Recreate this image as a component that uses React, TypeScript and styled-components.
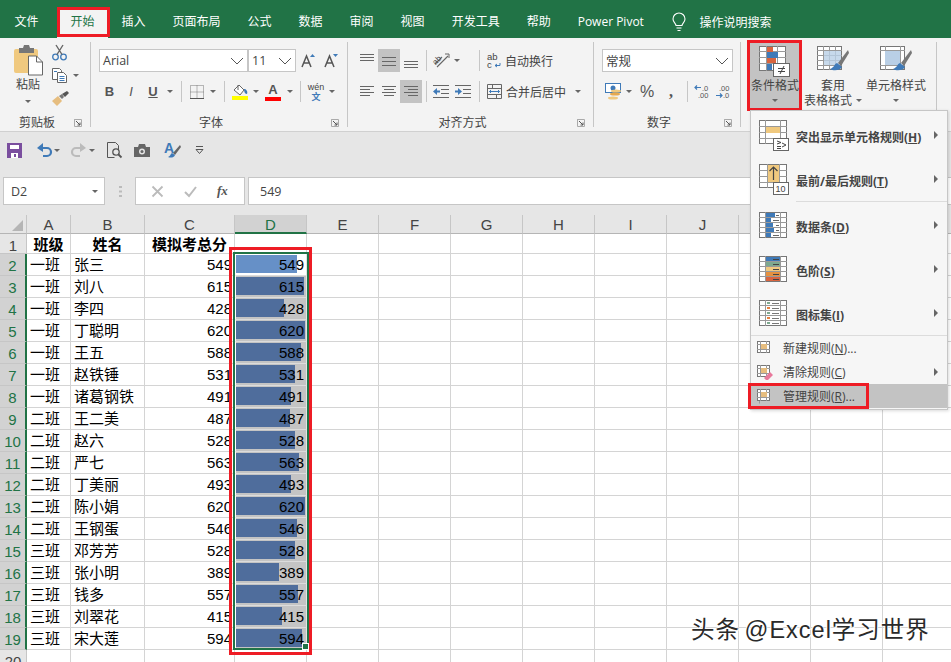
import { ReactNode } from "react";
import styled, { createGlobalStyle } from "styled-components";

const GlobalStyle = createGlobalStyle`
  html, body { margin: 0; padding: 0; background: #fff; }
  body { font-family: "Liberation Sans", "Noto Sans CJK SC", sans-serif; }
`;

const UI = `"Open Sans", "Noto Sans CJK SC", sans-serif`;
const GREEN = "#217346";
const RED = "#ee1c25";

const Page = styled.div`
  position: relative;
  width: 951px;
  height: 662px;
  overflow: hidden;
  display: flex;
  flex-direction: column;
`;

/* title tabs */
const TabBar = styled.div`
  height: 38px;
  flex: none;
  background: ${GREEN};
  display: flex;
  align-items: flex-end;
  padding-left: 1px;
  font-family: ${UI};
  font-size: 12px;
  color: #fff;
`;
const Tab = styled.div<{ $active?: boolean; $gapAfter?: number }>`
  height: 30px;
  line-height: 28px;
  padding: 0 13.5px;
  margin-right: ${(p) => p.$gapAfter ?? 0}px;
  background: ${(p) => (p.$active ? "#f3f3f3" : "transparent")};
  color: ${(p) => (p.$active ? GREEN : "#fff")};
  white-space: nowrap;
`;
const Search = styled.div`
  height: 30px;
  margin-left: 15px;
  display: flex;
  align-items: center;
  gap: 13px;
  padding-bottom: 2px;
  box-sizing: border-box;
`;

/* ribbon */
const Ribbon = styled.div`
  height: 94px;
  flex: none;
  box-sizing: border-box;
  background: #f3f3f3;
  border-bottom: 1px solid #d0d0d0;
  display: flex;
  font-family: ${UI};
  font-size: 12px;
  color: #444;
`;
const Group = styled.div<{ $w: number }>`
  width: ${(p) => p.$w}px;
  flex: none;
  display: flex;
  flex-direction: column;
`;
const GroupBody = styled.div<{ $pad?: number }>`
  flex: 1;
  padding: 11px 0 0 ${(p) => p.$pad ?? 8}px;
  display: flex;
  flex-direction: column;
  gap: 8px;
`;
const GroupLine = styled.div`
  width: 1px;
  flex: none;
  margin: 4px 0 4px;
  background: #c6c6c6;
`;
const Footer = styled.div`
  height: 20px;
  flex: none;
  box-sizing: border-box;
  padding-top: 3px;
  display: flex;
  align-items: center;
`;
const FooterLabel = styled.div`
  flex: 1;
  text-align: center;
  line-height: 17px;
`;
const Launcher = styled.div`
  width: 16px;
  flex: none;
  display: flex;
  justify-content: flex-start;
`;
const Row = styled.div`
  height: 23px;
  display: flex;
  align-items: center;
`;
const Slot = styled.div<{ $w: number; $on?: boolean; $ml?: number }>`
  width: ${(p) => p.$w}px;
  height: 23px;
  margin-left: ${(p) => p.$ml ?? 0}px;
  flex: none;
  display: flex;
  align-items: center;
  justify-content: center;
  background: ${(p) => (p.$on ? "#c3c3c3" : "transparent")};
`;
const Divider = styled.div`
  width: 1px;
  height: 21px;
  background: #c6c6c6;
`;
const Caret = styled.span`
  display: block;
  width: 0;
  height: 0;
  border-top: 3px solid #666;
  border-left: 3px solid transparent;
  border-right: 3px solid transparent;
`;
const SelectBox = styled.div<{ $w: number }>`
  width: ${(p) => p.$w}px;
  height: 23px;
  flex: none;
  box-sizing: border-box;
  background: #fff;
  border: 1px solid #c6c6c6;
  display: flex;
  align-items: center;
  justify-content: space-between;
  padding: 0 3px;
  font-size: 12.5px;
`;
const FontFaceLetter = styled.span<{ $b?: boolean; $i?: boolean; $u?: boolean }>`
  font-family: "Liberation Sans", sans-serif;
  font-size: 13px;
  font-weight: ${(p) => (p.$b || p.$u ? 700 : 400)};
  font-style: ${(p) => (p.$i ? "italic" : "normal")};
  text-decoration: ${(p) => (p.$u ? "underline" : "none")};
  color: #555;
`;
const ColorLetter = styled.div`
  width: 16px;
  display: flex;
  flex-direction: column;
  align-items: center;
  font: 700 13px/14px "Liberation Sans", sans-serif;
  color: #555;
`;
const ColorBar = styled.div<{ $c: string }>`
  width: 16px;
  height: 4px;
  background: ${(p) => p.$c};
`;
const Phonetic = styled.div`
  display: flex;
  flex-direction: column;
  align-items: center;
  font: 9px/10px "Liberation Sans", "Noto Sans CJK SC", sans-serif;
  color: #444;
`;
const PhoneticBase = styled.span`
  color: #3f7ab8;
  font-size: 9px;
  font-weight: 700;
`;
const ClipBody = styled.div`
  flex: 1;
  display: flex;
  padding-top: 7px;
`;
const PasteCol = styled.div`
  width: 52px;
  flex: none;
  display: flex;
  flex-direction: column;
  align-items: center;
  padding-left: 4px;
  box-sizing: border-box;
`;
const PasteLabel = styled.div`
  margin: 2px 0 7px;
  line-height: 16px;
`;
const ClipTools = styled.div`
  display: flex;
  flex-direction: column;
  gap: 8px;
`;
const ClipTool = styled.div`
  display: flex;
  align-items: center;
  gap: 6px;
  height: 15px;
`;
const SlotText = styled.span`
  white-space: nowrap;
`;
const PercentMark = styled.span`
  font: 16px "Liberation Sans", sans-serif;
  color: #555;
`;
const CommaMark = styled.span`
  font: 700 16px "Liberation Serif", serif;
  color: #555;
`;
const StylesBody = styled.div`
  flex: 1;
  display: flex;
  padding: 4px 0 0 9px;
`;
const BigButton = styled.div<{ $w: number; $on?: boolean; $ml?: number }>`
  width: ${(p) => p.$w}px;
  height: 66px;
  margin-left: ${(p) => p.$ml ?? 0}px;
  flex: none;
  display: flex;
  flex-direction: column;
  align-items: center;
  padding-top: 4px;
  box-sizing: border-box;
  background: ${(p) => (p.$on ? "#c3c3c3" : "transparent")};
  line-height: 15px;
  white-space: nowrap;
`;
const BigText = styled.div`
  display: flex;
  align-items: center;
  justify-content: center;
  gap: 4px;
  height: 15px;
`;
const BigIconWrap = styled.div`
  height: 31px;
  margin-bottom: 1px;
`;

/* quick access + formula bar */
const Chrome = styled.div`
  height: 83px;
  flex: none;
  background: #e6e6e6;
  display: flex;
  flex-direction: column;
`;
const QuickBar = styled.div`
  height: 34px;
  padding-top: 2px;
  box-sizing: border-box;
  display: flex;
  align-items: center;
`;
const FormulaBar = styled.div`
  height: 28px;
  margin-top: 11px;
  display: flex;
  font-size: 13px;
  color: #444;
`;
const NameBox = styled.div`
  width: 102px;
  margin-left: 3px;
  box-sizing: border-box;
  background: #fff;
  border: 1px solid #c6c6c6;
  display: flex;
  align-items: center;
  justify-content: space-between;
  padding: 0 6px 0 7px;
  font-family: ${UI};
  font-size: 12.5px;
`;
const GripDots = styled.div`
  width: 30px;
  display: flex;
  align-items: center;
  justify-content: center;
`;
const FxBox = styled.div`
  width: 110px;
  box-sizing: border-box;
  background: #fff;
  border: 1px solid #c6c6c6;
  display: flex;
  align-items: center;
  justify-content: space-around;
  padding: 0 6px;
`;
const FxText = styled.span`
  font: italic 700 13px "Liberation Serif", serif;
  color: #555;
`;
const FormulaInput = styled.div`
  flex: 1;
  margin-left: 3px;
  background: #fff;
  border: 1px solid #c6c6c6;
  border-right: 0;
  display: flex;
  align-items: center;
  padding-left: 11px;
  font-family: ${UI};
  font-size: 12.5px;
`;

/* sheet */
const Sheet = styled.div`
  display: grid;
  grid-template-columns: 27px 44px 74px 90px repeat(10, 72px);
  grid-auto-rows: 22px;
  grid-template-rows: 19px 20px;
  color: #000;
  font-size: 15px;
  background: #fff;
`;
const Corner = styled.div`
  background: #e6e6e6;
  border-right: 1px solid #c6c6c6;
  border-bottom: 1px solid #b5b5b5;
  display: flex;
  align-items: flex-end;
  justify-content: flex-end;
  padding: 0 3px 2px 0;
`;
const ColHead = styled.div<{ $on?: boolean }>`
  background: ${(p) => (p.$on ? "#d2d2d2" : "#e6e6e6")};
  color: ${(p) => (p.$on ? GREEN : "#444")};
  border-right: 1px solid #c6c6c6;
  border-bottom: ${(p) => (p.$on ? `2px solid ${GREEN}` : "1px solid #b5b5b5")};
  font-size: 15px;
  line-height: 19px;
  text-align: center;
`;
const RowHead = styled.div<{ $on?: boolean }>`
  background: ${(p) => (p.$on ? "#d2d2d2" : "#e6e6e6")};
  color: ${(p) => (p.$on ? GREEN : "#444")};
  border-right: ${(p) => (p.$on ? `2px solid ${GREEN}` : "1px solid #c6c6c6")};
  border-bottom: 1px solid #c6c6c6;
  font-size: 15px;
  line-height: 23px;
  text-align: center;
`;
const Cell = styled.div<{ $align?: string; $bold?: boolean; $pad?: number }>`
  border-right: 1px solid #d4d4d4;
  border-bottom: 1px solid #d4d4d4;
  box-sizing: border-box;
  overflow: hidden;
  white-space: nowrap;
  text-align: ${(p) => p.$align ?? "left"};
  font-weight: ${(p) => (p.$bold ? 700 : 400)};
  padding: 0 ${(p) => (p.$align === "right" ? 2 : 0)}px 0 ${(p) => p.$pad ?? 3}px;
  line-height: 22px;
`;
const BarCell = styled.div<{ $active?: boolean }>`
  position: relative;
  background: ${(p) => (p.$active ? "#fff" : "#c4c4c4")};
  border-bottom: 1px solid #dcdcdc;
  border-left: 1px solid #fff;
  border-right: 1px solid #e4e4e4;
  box-sizing: border-box;
  text-align: right;
  padding-right: 2px;
  line-height: 22px;
  color: #000;
`;
const Bar = styled.div<{ $active?: boolean }>`
  position: absolute;
  left: 0;
  top: 1px;
  height: 18px;
  background: ${(p) => (p.$active ? "#6690c7" : "#4f6d9c")};
`;
const BarValue = styled.span`
  position: relative;
`;

/* things lying over the page */
const RedFrame = styled.div<{ $x: number; $y: number; $w: number; $h: number }>`
  position: absolute;
  left: ${(p) => p.$x}px;
  top: ${(p) => p.$y}px;
  width: ${(p) => p.$w}px;
  height: ${(p) => p.$h}px;
  box-sizing: border-box;
  border: 3px solid ${RED};
`;
const Selection = styled.div`
  position: absolute;
  left: 233px;
  top: 252px;
  width: 76px;
  height: 398px;
  box-sizing: border-box;
  border: 2px solid ${GREEN};
`;
const FillHandle = styled.div`
  position: absolute;
  right: -2px;
  bottom: -2px;
  width: 5px;
  height: 5px;
  background: ${GREEN};
  border: 1px solid #fff;
  box-sizing: content-box;
`;
const Menu = styled.div`
  position: absolute;
  left: 750px;
  top: 110px;
  width: 198px;
  height: 300px;
  box-sizing: border-box;
  padding-top: 2px;
  background: #f6f6f6;
  border: 1px solid #c6c6c6;
  box-shadow: 1px 1px 3px rgba(0, 0, 0, 0.15);
  font-family: ${UI};
  font-size: 12px;
  color: #444;
`;
const BigItem = styled.div`
  height: 44px;
  display: flex;
  align-items: center;
`;
const BigItemIcon = styled.div`
  width: 45px;
  flex: none;
  padding-left: 8px;
  box-sizing: border-box;
`;
const BigItemText = styled.div`
  flex: 1;
  font-weight: 700;
  padding-top: 3px;
  white-space: nowrap;
`;
const SubArrow = styled.span`
  display: block;
  width: 0;
  height: 0;
  margin-right: 9px;
  border-left: 4px solid #666;
  border-top: 4px solid transparent;
  border-bottom: 4px solid transparent;
`;
const MenuRule = styled.div<{ $inset?: number; $after?: number }>`
  height: 1px;
  margin-left: ${(p) => p.$inset ?? 0}px;
  margin-bottom: ${(p) => p.$after ?? 0}px;
  background: #dcdcdc;
`;
const SmallItem = styled.div<{ $on?: boolean }>`
  height: 24px;
  display: flex;
  align-items: center;
  background: ${(p) => (p.$on ? "#c3c3c3" : "transparent")};
`;
const SmallItemIcon = styled.div`
  width: 32px;
  flex: none;
  padding-left: 6px;
  box-sizing: border-box;
`;
const SmallItemText = styled.div`
  flex: 1;
  white-space: nowrap;
`;
const Watermark = styled.div`
  position: absolute;
  left: 691px;
  top: 615px;
  font-family: "Liberation Sans", "Noto Sans CJK SC", sans-serif;
  font-size: 23.5px;
  line-height: 30px;
  color: #2a2a2a;
  letter-spacing: 1px;
  word-spacing: -3px;
  white-space: nowrap;
  text-shadow: 1px 1px 0 #fff, -1px 0 0 #fff, 0 -1px 0 #fff;
`;

/* drawings */
const Svg = styled.svg`
  display: block;
  flex: none;
  overflow: visible;
`;
const FlipSvg = styled(Svg)<{ $flip?: boolean }>`
  transform: ${(p) => (p.$flip ? "scaleX(-1)" : "none")};
`;
const Pic = ({ w, h, children }: { w: number; h: number; children: ReactNode }) => (
  <Svg width={w} height={h} viewBox={`0 0 ${w} ${h}`} fill="none">
    {children}
  </Svg>
);

const Chevron = () => (
  <Pic w={14} h={8}>
    <path d="M1 1l6 6 6-6" stroke="#555" />
  </Pic>
);
const Launch = () => (
  <Pic w={8} h={8}>
    <path d="M.5 .5h7v7h-7z M4 .5h-3.500v3.500" stroke="#aaa" />
    <path d="M2 2l4 4M6 3.500v2.500h-2.500" stroke="#555" />
  </Pic>
);
const PasteIcon = () => (
  <Pic w={29} h={30}>
    <rect x="0" y="4" width="24" height="24" rx="2" fill="#f0c97f" />
    <path d="M5 3h4l1-3h5l1 3h4v5H5z" fill="#777" />
    <path d="M14.500 11h8l6 6v13h-14z" fill="#fff" stroke="#666" />
    <path d="M22.500 11v6h6" stroke="#666" />
  </Pic>
);
const ScissorsIcon = () => (
  <Pic w={15} h={16}>
    <circle cx="3.500" cy="12" r="2.800" stroke="#3f7ab8" strokeWidth="1.300" />
    <circle cx="11.500" cy="12" r="2.800" stroke="#3f7ab8" strokeWidth="1.300" />
    <path d="M5 9.500L11 0M10 9.500L4 0" stroke="#666" strokeWidth="1.400" />
  </Pic>
);
const CopyIcon = () => (
  <Pic w={15} h={15}>
    <path d="M.5 .5h7l2 2v9h-9z" fill="#fff" stroke="#666" />
    <path d="M5.500 4.500h6l3 3v7h-9z" fill="#fff" stroke="#666" />
    <path d="M7.500 8.500h5M7.500 10.500h5M7.500 12.500h5M2 3.500h3" stroke="#3f7ab8" />
  </Pic>
);
const BrushIcon = () => (
  <Pic w={17} h={15}>
    <path d="M0 10l6-5 4 5-5 5z" fill="#e6bd7f" />
    <path d="M7 5l3-2 2 3-2 2z" fill="#777" />
    <path d="M10 3l5-3 2 2-4 4z" fill="#555" />
  </Pic>
);
const SizeA = ({ up }: { up?: boolean }) => (
  <Pic w={14} h={15}>
    <path d="M1 14L5.500 3 10 14M2.500 10h6" stroke="#555" strokeWidth="1.500" />
    <path d={up ? "M9 4l2.500-3L14 4z" : "M9 1h5l-2.500 3z"} fill="#3f7ab8" />
  </Pic>
);
const BordersIcon = () => (
  <Pic w={14} h={14}>
    <path d="M.5 .5h13v13h-13zM7 .5v13M.5 7h13" stroke="#777" strokeDasharray="1 1" />
    <path d="M0 13.500h14" stroke="#555" />
  </Pic>
);
const FillIcon = () => (
  <Pic w={16} h={12}>
    <path d="M2 6l5-5 5 5-4 5z" fill="#fff" stroke="#666" />
    <path d="M6 1V6" stroke="#666" />
    <path d="M12 5c2 0 4 2 3 5-2 0-3-2-3-5z" fill="#3f7ab8" />
  </Pic>
);
const AlignIcon = ({ ys, xs }: { ys: number[]; xs: [number, number][] }) => (
  <Pic w={14} h={16}>
    {ys.map((y, i) => (
      <path key={y} d={`M${xs[i][0]} ${y}.5H${xs[i][1]}`} stroke="#666" />
    ))}
  </Pic>
);
const OrientIcon = () => (
  <Pic w={16} h={16}>
    <path d="M2 11l7-7M4 14L15 3" stroke="#666" strokeWidth="1.100" />
    <path d="M12 1h4v4" stroke="#666" />
    <text x="0" y="10" fontSize="8" fontFamily="Liberation Sans" fill="#444" transform="rotate(-45 4 8)">ab</text>
  </Pic>
);
const WrapIcon = () => (
  <Pic w={14} h={16}>
    <text x="0" y="7" fontSize="9.500" fontFamily="Liberation Sans" fill="#444">ab</text>
    <text x="0" y="15" fontSize="9.500" fontFamily="Liberation Sans" fill="#444">c</text>
    <path d="M13 10v2.500H8M10 11l-2 1.500 2 1.500" stroke="#3f7ab8" />
  </Pic>
);
const MergeIcon = () => (
  <Pic w={15} h={15}>
    <path d="M.5 .5h14v14H.5zM.5 4.500h14M.5 10.500h14M5.500 .5v4M9.500 10.500v4" stroke="#666" />
    <path d="M2.500 7.500h10M4 6L2.500 7.500 4 9M11 6l1.500 1.500L11 9" stroke="#3f7ab8" />
  </Pic>
);
const IndentIcon = ({ right }: { right?: boolean }) => (
  <Pic w={16} h={14}>
    <path d="M0 .5h16M8 4.500h8M8 8.500h8M0 12.500h16" stroke="#666" />
    <path
      d={right ? "M0 5.500h3V3l4 3.500-4 3.500V7.500H0z" : "M7 5.500H4V3L0 6.500 4 10V7.500h3z"}
      fill="#3f7ab8"
    />
  </Pic>
);
const CurrencyIcon = () => (
  <Pic w={17} h={17}>
    <rect x=".5" y=".5" width="15" height="9" stroke="#3f7ab8" fill="#fff" />
    <circle cx="8" cy="5" r="2.500" fill="#3f7ab8" />
    <ellipse cx="11" cy="8" rx="5" ry="1.500" fill="#f0c97f" />
    <ellipse cx="10" cy="11" rx="5" ry="1.500" fill="#e6a94f" />
    <ellipse cx="8" cy="15" rx="5" ry="1.500" fill="#f0c97f" />
  </Pic>
);
const DecimalIcon = ({ more }: { more?: boolean }) => (
  <Pic w={16} h={15}>
    <text x={more ? 3 : 7} y="6.500" fontSize="7.500" fontFamily="Liberation Sans" fill="#555">{more ? ".00" : ".0"}</text>
    <text x={more ? 7 : 3} y="14" fontSize="7.500" fontFamily="Liberation Sans" fill="#555">{more ? ".0" : ".00"}</text>
    <path
      d={more ? "M0 11.500h6M4 9.500l2 2-2 2" : "M6 3.500H0M2 1.500l-2 2 2 2"}
      stroke="#3f7ab8"
      strokeWidth="1.200"
    />
  </Pic>
);
const TableGrid = ({ w, h, cols, rows }: { w: number; h: number; cols: number[]; rows: number[] }) => (
  <>
    <rect x=".5" y=".5" width={w - 1} height={h - 1} stroke="#777" fill="#fff" />
    {cols.map((x) => (
      <path key={`c${x}`} d={`M${x}.5 0v${h}`} stroke="#999" />
    ))}
    {rows.map((y) => (
      <path key={`r${y}`} d={`M0 ${y}.5h${w}`} stroke="#999" />
    ))}
  </>
);
const CondIcon = () => (
  <Pic w={32} h={31}>
    <TableGrid w={27} h={25} cols={[7, 18]} rows={[5, 11, 17]} />
    <rect x="8" y="1" width="6" height="5" fill="#d9653f" />
    <rect x="8" y="6" width="11" height="6" fill="#3f7ab8" />
    <rect x="8" y="12" width="9" height="5" fill="#d9653f" />
    <rect x="8" y="18" width="5" height="6" fill="#3f7ab8" />
    <rect x="14.500" y="17.500" width="16" height="13" fill="#fff" stroke="#666" />
    <path d="M19 22.500h7M19 25.500h7M25 20l-4 8" stroke="#444" />
  </Pic>
);
const TableStyleIcon = () => (
  <Pic w={32} h={30}>
    <TableGrid w={25} h={24} cols={[6, 12, 18]} rows={[4, 9, 14, 19]} />
    <rect x="7" y="5" width="17" height="14" fill="#b9cfe6" opacity=".8" />
    <path d="M31 4L21 17l3 3L32 7z" fill="#777" />
    <path d="M20 17c-3 1-2 4-7 6 3 2 10 2 12-2z" fill="#3f7ab8" />
  </Pic>
);
const CellStyleIcon = () => (
  <Pic w={32} h={30}>
    <TableGrid w={25} h={24} cols={[5, 20]} rows={[4, 19]} />
    <rect x="5" y="5" width="15" height="14" fill="#b9cfe6" />
    <path d="M31 4L21 17l3 3L32 7z" fill="#777" />
    <path d="M20 17c-3 1-2 4-7 6 3 2 10 2 12-2z" fill="#3f7ab8" />
  </Pic>
);
const MenuHighlightIcon = () => (
  <Pic w={31} h={31}>
    <TableGrid w={28} h={24} cols={[6, 21]} rows={[6, 12, 18]} />
    <rect x="7" y="7" width="14" height="6" fill="#f0c97f" />
    <rect x="14.500" y="18.500" width="15" height="12" fill="#fff" stroke="#666" />
    <path d="M18 21l4 1.500-4 1.500M18 26.500h4M23 23l4 2-4 2M18 28.500h4" stroke="#444" />
  </Pic>
);
const MenuTopIcon = () => (
  <Pic w={31} h={31}>
    <TableGrid w={28} h={24} cols={[8, 20]} rows={[6, 12, 18]} />
    <rect x="9" y="1" width="11" height="17" fill="#f0c97f" />
    <path d="M14.500 16V3M10.500 7l4-4 4 4" stroke="#444" strokeWidth="1.200" />
    <rect x="14.500" y="18.500" width="15" height="12" fill="#fff" stroke="#666" />
    <text x="16.500" y="28" fontSize="9" fontFamily="Liberation Sans" fill="#444">10</text>
  </Pic>
);
const DataBarIcon = () => (
  <Pic w={28} h={26}>
    <TableGrid w={28} h={26} cols={[6, 21]} rows={[5, 10, 15, 20]} />
    <path d="M7 1h9v4H7zM7 6h5v4H7zM7 11h7v4H7zM7 16h8v4H7zM7 21h5v4H7z" fill="#3f7ab8" />
    <path d="M17 3.500h3M14 8.500h6M17 13.500h3M17 18.500h3M14 23.500h6" stroke="#666" />
  </Pic>
);
const ScaleIcon = () => (
  <Pic w={28} h={26}>
    <TableGrid w={28} h={26} cols={[6, 21]} rows={[5, 10, 15, 20]} />
    <rect x="7" y="1" width="14" height="4" fill="#3f7ab8" />
    <rect x="7" y="6" width="14" height="4" fill="#7da98f" />
    <rect x="7" y="11" width="14" height="4" fill="#f0c97f" />
    <rect x="7" y="16" width="14" height="4" fill="#e6913f" />
    <rect x="7" y="21" width="14" height="4" fill="#d9653f" />
    <path d="M14 3.500h6M14 8.500h6M14 13.500h6M14 18.500h6M14 23.500h6" stroke="#444" />
  </Pic>
);
const IconSetIcon = () => (
  <Pic w={28} h={26}>
    <TableGrid w={28} h={26} cols={[6, 21]} rows={[5, 10, 15, 20]} />
    <rect x="8" y="2" width="3" height="2" fill="#7da98f" />
    <rect x="8" y="7" width="3" height="2" fill="#e6813f" />
    <rect x="8" y="12" width="3" height="2" fill="#7da98f" />
    <rect x="8" y="17" width="3" height="2" fill="#e6813f" />
    <rect x="8" y="22" width="3" height="2" fill="#7da98f" />
    <path d="M13 3.500h7M13 8.500h7M13 13.500h7M13 18.500h7M13 23.500h7" stroke="#777" />
  </Pic>
);
const RuleIcon = ({ eraser, stacked }: { eraser?: boolean; stacked?: boolean }) => (
  <Pic w={15} h={15}>
    {stacked && <path d="M2.500 14.500v-12" stroke="#999" />}
    <TableGrid w={13} h={12} cols={[3, 9]} rows={[3, 8]} />
    <rect x="4" y="3" width="6" height="5" fill="#e6bd7f" />
    {eraser && <path d="M7 13l6-6 3 3-5 5H9z" fill="#e8799c" />}
  </Pic>
);
const BulbIcon = () => (
  <Pic w={14} h={19}>
    <path d="M4 12.500c0-2-3-3-3-6.500a6 6 0 0 1 12 0c0 3.500-3 4.500-3 6.500z" stroke="#fff" strokeWidth="1.100" />
    <path d="M4.500 15h5M5.500 17.500h3" stroke="#fff" strokeWidth="1.100" />
  </Pic>
);
const SaveIcon = () => (
  <Pic w={15} h={15}>
    <path d="M0 0h15v15H0z" fill="#7a4e9e" />
    <rect x="3" y="2" width="9" height="4" fill="#fff" />
    <rect x="4" y="10" width="7" height="5" fill="#fff" />
    <rect x="7" y="11" width="2" height="3" fill="#7a4e9e" />
  </Pic>
);
const ArrowIcon = ({ flip, color }: { flip?: boolean; color: string }) => (
  <FlipSvg $flip={flip} width={15} height={14} viewBox="0 0 15 14" fill="none">
    <path d="M4 5h6a4 4 0 0 1 0 8H6" stroke={color} strokeWidth="2.200" />
    <path d="M6 0v9L0 5z" fill={color} />
  </FlipSvg>
);
const PreviewIcon = () => (
  <Pic w={15} h={16}>
    <path d="M.5 .5h8l3 3v5M.5 .5v15h7" stroke="#555" />
    <circle cx="9" cy="10" r="3.200" stroke="#555" strokeWidth="1.300" />
    <path d="M11 12l3.500 3.500" stroke="#555" strokeWidth="1.800" />
  </Pic>
);
const CameraIcon = () => (
  <Pic w={16} h={13}>
    <path d="M0 3h4l1-3h6l1 3h4v10H0z" fill="#666" />
    <circle cx="8" cy="7.500" r="3" fill="#e6e6e6" />
    <circle cx="8" cy="7.500" r="1.500" fill="#666" />
  </Pic>
);
const SpellIcon = () => (
  <Pic w={17} h={16}>
    <text x="0" y="11" fontSize="14" fontWeight="700" fontFamily="Liberation Sans" fill="#3f7ab8">A</text>
    <path d="M16 3l-7 8 2 2 6-8z" fill="#666" />
    <path d="M8 11c-2 1-1 3-4 4 2 1 6 1 7-2z" fill="#3f7ab8" />
  </Pic>
);
const CustomizeIcon = () => (
  <Pic w={9} h={8}>
    <path d="M1 .5h7" stroke="#555" />
    <path d="M1 3.500h7L4.500 7.500z" stroke="#555" />
  </Pic>
);
const CrossIcon = () => (
  <Pic w={11} h={11}>
    <path d="M.5 .5l10 10M10.500 .5l-10 10" stroke="#bbb" strokeWidth="1.800" />
  </Pic>
);
const TickIcon = () => (
  <Pic w={13} h={11}>
    <path d="M1 6l4 4 7-9" stroke="#bbb" strokeWidth="2" />
  </Pic>
);
const Grip = () => (
  <Pic w={3} h={11}>
    <path d="M0 0h3v2H0zM0 4.500h3v2H0zM0 9h3v2H0z" fill="#bbb" />
  </Pic>
);
const CornerMark = () => (
  <Pic w={11} h={11}>
    <path d="M11 0v11H0z" fill="#b5b5b5" />
  </Pic>
);

const tabs = ["插入", "页面布局", "公式", "数据", "审阅", "视图", "开发工具", "帮助", "Power Pivot"];
const extraCols = ["E", "F", "G", "H", "I", "J", "K", "L", "M"];
const data: [string, string, number][] = [
  ["一班", "张三", 549],
  ["一班", "刘八", 615],
  ["一班", "李四", 428],
  ["一班", "丁聪明", 620],
  ["一班", "王五", 588],
  ["一班", "赵铁锤", 531],
  ["一班", "诸葛钢铁", 491],
  ["二班", "王二美", 487],
  ["二班", "赵六", 528],
  ["二班", "严七", 563],
  ["二班", "丁美丽", 493],
  ["二班", "陈小娟", 620],
  ["二班", "王钢蛋", 546],
  ["三班", "邓芳芳", 528],
  ["三班", "张小明", 389],
  ["三班", "钱多", 557],
  ["三班", "刘翠花", 415],
  ["三班", "宋大莲", 594],
];
const MAX = 620;
const BAR_FULL = 69;

const Blanks = ({ from }: { from: number }) => (
  <>
    {extraCols.map((c) => (
      <Cell key={c + from} />
    ))}
  </>
);

function DataRow({ n, cls, name, score }: { n: number; cls: string; name: string; score: number }) {
  const active = n === 2;
  return (
    <>
      <RowHead $on>{n}</RowHead>
      <Cell>{cls}</Cell>
      <Cell>{name}</Cell>
      <Cell $align="right">{score}</Cell>
      <BarCell $active={active}>
        <Bar $active={active} style={{ width: (score / MAX) * BAR_FULL }} />
        <BarValue>{score}</BarValue>
      </BarCell>
      <Blanks from={n} />
    </>
  );
}

export default function App() {
  return (
    <Page>
      <GlobalStyle />
      <TabBar>
        <Tab $gapAfter={5}>文件</Tab>
        <Tab $active>开始</Tab>
        {tabs.map((t) => (
          <Tab key={t}>{t}</Tab>
        ))}
        <Search>
          <BulbIcon />
          <span>操作说明搜索</span>
        </Search>
      </TabBar>

      <Ribbon>
        <Group $w={90}>
          <ClipBody>
            <PasteCol>
              <PasteIcon />
              <PasteLabel>粘贴</PasteLabel>
              <Caret />
            </PasteCol>
            <ClipTools>
              <ClipTool>
                <ScissorsIcon />
              </ClipTool>
              <ClipTool>
                <CopyIcon />
                <Caret />
              </ClipTool>
              <ClipTool>
                <BrushIcon />
              </ClipTool>
            </ClipTools>
          </ClipBody>
          <Footer>
            <FooterLabel>剪贴板</FooterLabel>
            <Launcher>
              <Launch />
            </Launcher>
          </Footer>
        </Group>
        <GroupLine />
        <Group $w={256}>
          <GroupBody>
            <Row>
              <SelectBox $w={149}>
                Arial
                <Chevron />
              </SelectBox>
              <SelectBox $w={48}>
                11
                <Chevron />
              </SelectBox>
              <Slot $w={23}>
                <SizeA up />
              </Slot>
              <Slot $w={23}>
                <SizeA />
              </Slot>
            </Row>
            <Row>
              <Slot $w={21}>
                <FontFaceLetter $b>B</FontFaceLetter>
              </Slot>
              <Slot $w={22}>
                <FontFaceLetter $i>I</FontFaceLetter>
              </Slot>
              <Slot $w={22}>
                <FontFaceLetter $u>U</FontFaceLetter>
              </Slot>
              <Slot $w={12}>
                <Caret />
              </Slot>
              <Slot $w={10}>
                <Divider />
              </Slot>
              <Slot $w={21}>
                <BordersIcon />
              </Slot>
              <Slot $w={12}>
                <Caret />
              </Slot>
              <Slot $w={10}>
                <Divider />
              </Slot>
              <Slot $w={22}>
                <ColorLetter>
                  <FillIcon />
                  <ColorBar $c="#ffff00" />
                </ColorLetter>
              </Slot>
              <Slot $w={10}>
                <Caret />
              </Slot>
              <Slot $w={24}>
                <ColorLetter>
                  A
                  <ColorBar $c="#ff0000" />
                </ColorLetter>
              </Slot>
              <Slot $w={10}>
                <Caret />
              </Slot>
              <Slot $w={10}>
                <Divider />
              </Slot>
              <Slot $w={22}>
                <Phonetic>
                  wén
                  <PhoneticBase>文</PhoneticBase>
                </Phonetic>
              </Slot>
              <Slot $w={10}>
                <Caret />
              </Slot>
            </Row>
          </GroupBody>
          <Footer>
            <FooterLabel>字体</FooterLabel>
            <Launcher>
              <Launch />
            </Launcher>
          </Footer>
        </Group>
        <GroupLine />
        <Group $w={245}>
          <GroupBody>
            <Row>
              <Slot $w={22}>
                <AlignIcon ys={[1, 4, 7]} xs={[[0, 14], [0, 14], [0, 14]]} />
              </Slot>
              <Slot $w={22} $on>
                <AlignIcon ys={[4, 8, 12]} xs={[[0, 14], [0, 14], [0, 14]]} />
              </Slot>
              <Slot $w={22}>
                <AlignIcon ys={[8, 11, 14]} xs={[[0, 14], [0, 14], [0, 14]]} />
              </Slot>
              <Slot $w={8}>
                <Divider />
              </Slot>
              <Slot $w={22}>
                <OrientIcon />
              </Slot>
              <Slot $w={10}>
                <Caret />
              </Slot>
              <Slot $w={12} />
              <Slot $w={10}>
                <Divider />
              </Slot>
              <Slot $w={20}>
                <WrapIcon />
              </Slot>
              <Slot $w={50}>
                <SlotText>自动换行</SlotText>
              </Slot>
            </Row>
            <Row>
              <Slot $w={22}>
                <AlignIcon ys={[2, 5, 8, 11]} xs={[[0, 14], [0, 10], [0, 14], [0, 10]]} />
              </Slot>
              <Slot $w={22}>
                <AlignIcon ys={[2, 5, 8, 11]} xs={[[0, 14], [2, 12], [0, 14], [2, 12]]} />
              </Slot>
              <Slot $w={22} $on>
                <AlignIcon ys={[2, 5, 8, 11]} xs={[[0, 14], [4, 14], [0, 14], [4, 14]]} />
              </Slot>
              <Slot $w={8}>
                <Divider />
              </Slot>
              <Slot $w={22}>
                <IndentIcon />
              </Slot>
              <Slot $w={22}>
                <IndentIcon right />
              </Slot>
              <Slot $w={10}>
                <Divider />
              </Slot>
              <Slot $w={21}>
                <MergeIcon />
              </Slot>
              <Slot $w={62}>
                <SlotText>合并后居中</SlotText>
              </Slot>
              <Slot $w={22}>
                <Caret />
              </Slot>
            </Row>
          </GroupBody>
          <Footer>
            <FooterLabel>对齐方式</FooterLabel>
            <Launcher>
              <Launch />
            </Launcher>
          </Footer>
        </Group>
        <GroupLine />
        <Group $w={146}>
          <GroupBody>
            <Row>
              <SelectBox $w={131}>
                常规
                <Chevron />
              </SelectBox>
            </Row>
            <Row>
              <Slot $w={22}>
                <CurrencyIcon />
              </Slot>
              <Slot $w={10}>
                <Caret />
              </Slot>
              <Slot $w={26}>
                <PercentMark>%</PercentMark>
              </Slot>
              <Slot $w={22}>
                <CommaMark>,</CommaMark>
              </Slot>
              <Slot $w={10}>
                <Divider />
              </Slot>
              <Slot $w={21}>
                <DecimalIcon />
              </Slot>
              <Slot $w={21}>
                <DecimalIcon more />
              </Slot>
            </Row>
          </GroupBody>
          <Footer>
            <FooterLabel>数字</FooterLabel>
            <Launcher>
              <Launch />
            </Launcher>
          </Footer>
        </Group>
        <GroupLine />
        <Group $w={195}>
          <StylesBody>
            <BigButton $w={50} $on>
              <BigIconWrap>
                <CondIcon />
              </BigIconWrap>
              <BigText>条件格式</BigText>
              <BigText>
                <Caret />
              </BigText>
            </BigButton>
            <BigButton $w={62} $ml={2}>
              <BigIconWrap>
                <TableStyleIcon />
              </BigIconWrap>
              <BigText>套用</BigText>
              <BigText>
                表格格式
                <Caret />
              </BigText>
            </BigButton>
            <BigButton $w={64}>
              <BigIconWrap>
                <CellStyleIcon />
              </BigIconWrap>
              <BigText>单元格样式</BigText>
              <BigText>
                <Caret />
              </BigText>
            </BigButton>
          </StylesBody>
        </Group>
        <GroupLine />
      </Ribbon>

      <Chrome>
        <QuickBar>
          <Slot $w={15} $ml={7}>
            <SaveIcon />
          </Slot>
          <Slot $w={16} $ml={14}>
            <ArrowIcon color="#3f7ab8" />
          </Slot>
          <Slot $w={10}>
            <Caret />
          </Slot>
          <Slot $w={15} $ml={9}>
            <ArrowIcon flip color="#bbb" />
          </Slot>
          <Slot $w={12}>
            <Caret />
          </Slot>
          <Slot $w={22} $ml={5}>
            <PreviewIcon />
          </Slot>
          <Slot $w={28} $ml={3}>
            <CameraIcon />
          </Slot>
          <Slot $w={32}>
            <SpellIcon />
          </Slot>
          <Slot $w={22}>
            <CustomizeIcon />
          </Slot>
        </QuickBar>
        <FormulaBar>
          <NameBox>
            D2
            <Caret />
          </NameBox>
          <GripDots>
            <Grip />
          </GripDots>
          <FxBox>
            <CrossIcon />
            <TickIcon />
            <FxText>fx</FxText>
          </FxBox>
          <FormulaInput>549</FormulaInput>
        </FormulaBar>
      </Chrome>

      <Sheet>
        <Corner>
          <CornerMark />
        </Corner>
        <ColHead>A</ColHead>
        <ColHead>B</ColHead>
        <ColHead>C</ColHead>
        <ColHead $on>D</ColHead>
        {extraCols.map((c) => (
          <ColHead key={c}>{c}</ColHead>
        ))}

        <RowHead>1</RowHead>
        <Cell $align="center" $bold $pad={0}>班级</Cell>
        <Cell $align="center" $bold $pad={0}>姓名</Cell>
        <Cell $align="center" $bold $pad={0}>模拟考总分</Cell>
        <Cell />
        <Blanks from={1} />

        {data.map(([cls, name, score], i) => (
          <DataRow key={i} n={i + 2} cls={cls} name={name} score={score} />
        ))}

        <RowHead>20</RowHead>
        <Cell />
        <Cell />
        <Cell />
        <Cell />
        <Blanks from={20} />
      </Sheet>

      <Selection>
        <FillHandle />
      </Selection>
      <RedFrame $x={229} $y={247} $w={83} $h={408} />
      <RedFrame $x={57} $y={7} $w={53} $h={30} />
      <RedFrame $x={747} $y={40} $w={55} $h={71} />

      <Menu>
        <BigItem>
          <BigItemIcon>
            <MenuHighlightIcon />
          </BigItemIcon>
          <BigItemText>突出显示单元格规则(<u>H</u>)</BigItemText>
          <SubArrow />
        </BigItem>
        <BigItem>
          <BigItemIcon>
            <MenuTopIcon />
          </BigItemIcon>
          <BigItemText>最前/最后规则(<u>T</u>)</BigItemText>
          <SubArrow />
        </BigItem>
        <MenuRule $inset={45} $after={1} />
        <BigItem>
          <BigItemIcon>
            <DataBarIcon />
          </BigItemIcon>
          <BigItemText>数据条(<u>D</u>)</BigItemText>
          <SubArrow />
        </BigItem>
        <BigItem>
          <BigItemIcon>
            <ScaleIcon />
          </BigItemIcon>
          <BigItemText>色阶(<u>S</u>)</BigItemText>
          <SubArrow />
        </BigItem>
        <BigItem>
          <BigItemIcon>
            <IconSetIcon />
          </BigItemIcon>
          <BigItemText>图标集(<u>I</u>)</BigItemText>
          <SubArrow />
        </BigItem>
        <MenuRule />
        <SmallItem>
          <SmallItemIcon>
            <RuleIcon />
          </SmallItemIcon>
          <SmallItemText>新建规则(<u>N</u>)...</SmallItemText>
        </SmallItem>
        <SmallItem>
          <SmallItemIcon>
            <RuleIcon eraser />
          </SmallItemIcon>
          <SmallItemText>清除规则(<u>C</u>)</SmallItemText>
          <SubArrow />
        </SmallItem>
        <SmallItem $on>
          <SmallItemIcon>
            <RuleIcon stacked />
          </SmallItemIcon>
          <SmallItemText>管理规则(<u>R</u>)...</SmallItemText>
        </SmallItem>
      </Menu>
      <RedFrame $x={748} $y={383} $w={121} $h={26} />

      <Watermark>头条 @Excel学习世界</Watermark>
    </Page>
  );
}
